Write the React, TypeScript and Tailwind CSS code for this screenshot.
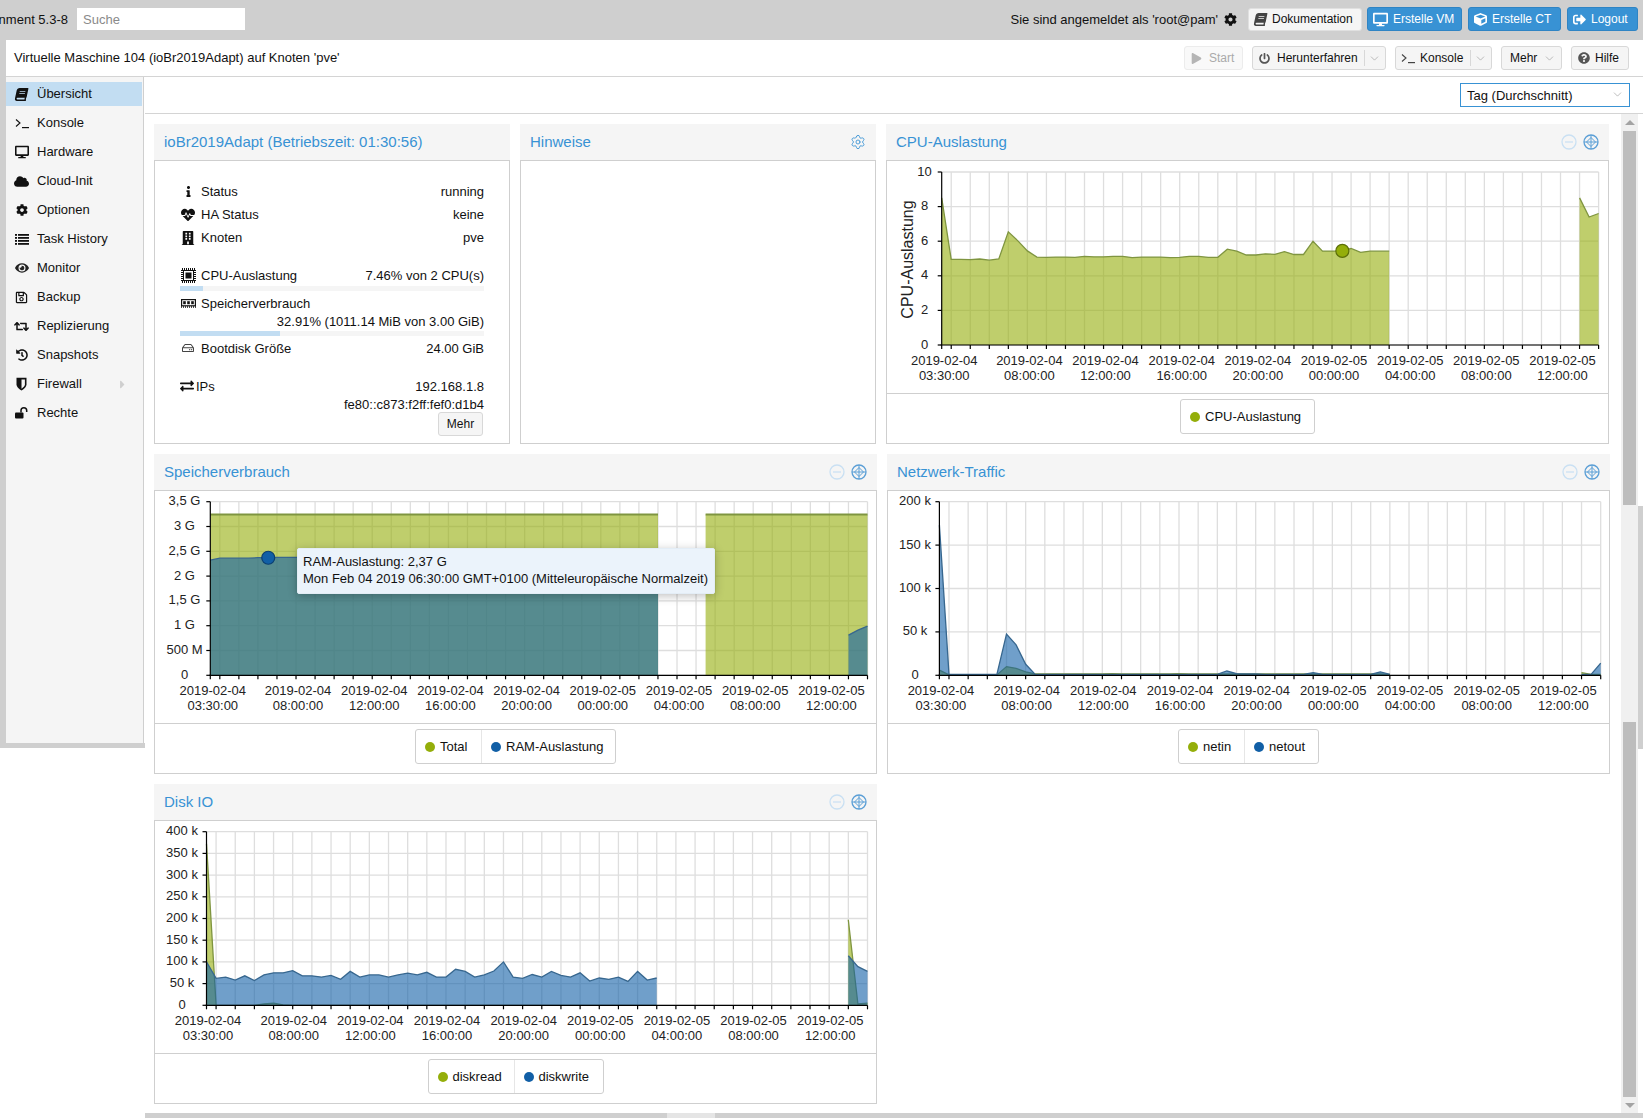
import { ChevronDown, Settings } from 'lucide-react';
import { ReactNode } from 'react';
import {
  FaBook, FaCloud, FaCog, FaCube, FaDesktop, FaExchangeAlt, FaEye, FaHeartbeat, FaHistory, FaInfo,
  FaBuilding, FaPlay, FaPowerOff, FaQuestionCircle, FaRegHdd, FaRegSave,
  FaRetweet, FaSignOutAlt, FaCaretRight,
} from 'react-icons/fa';

const GREEN = '#94ae0a';
const BLUE = '#115fa6';
const GREEN_LINE = '#7f9540';
const BLUE_LINE = '#37678f';

function TerminalIcon({ className }: { className?: string }) {
  return (
    <svg width="14" height="11" viewBox="0 0 14 11" className={className}>
      <path d="M1 1.5 5 5 1 8.5" fill="none" stroke="currentColor" strokeWidth="1.1" />
      <rect x="7" y="9" width="7" height="1.2" fill="currentColor" />
    </svg>
  );
}

function ListIcon() {
  return (
    <svg width="14" height="11" viewBox="0 0 14 11" fill="currentColor">
      {[0, 3, 6, 9].map((y) => (
        <g key={y}>
          <rect x="0" y={y} width="2" height="1.8" />
          <rect x="3" y={y} width="11" height="1.8" />
        </g>
      ))}
    </svg>
  );
}

function ShieldIcon() {
  return (
    <svg width="11" height="14" viewBox="0 0 11 14">
      <path d="M.5.8h10v6.4c0 3-3 5-5 6.3-2-1.3-5-3.300-5-6.300Z" fill="currentColor" />
      <path d="M5.500 2.500h3.400v4.700c0 2-1.800 3.400-3.400 4.500Z" fill="#f5f5f5" />
    </svg>
  );
}

function UnlockIcon() {
  return (
    <svg width="13" height="12" viewBox="0 0 13 12">
      <rect x="0" y="5.500" width="8.500" height="6" rx="1" fill="currentColor" />
      <path d="M6 5.500V3.600a2.800 2.800 0 0 1 5.700 0V5" fill="none" stroke="currentColor" strokeWidth="1.500" />
    </svg>
  );
}

function ChipIcon() {
  return (
    <svg width="15" height="15" viewBox="0 0 15 15">
      <rect x="1" y="1" width="13" height="13" fill="none" stroke="currentColor" strokeWidth="2" strokeDasharray="1 1" />
      <rect x="2.500" y="2.500" width="10" height="10" fill="#fff" stroke="currentColor" strokeWidth="1" />
      <rect x="4.500" y="4.500" width="6" height="6" fill="currentColor" />
    </svg>
  );
}

function MemIcon() {
  return (
    <svg width="15" height="9" viewBox="0 0 15 9">
      <rect x=".6" y=".6" width="13.800" height="6.200" fill="none" stroke="currentColor" strokeWidth="1.200" />
      <rect x="2.200" y="2.200" width="2.600" height="3" fill="currentColor" />
      <rect x="6.200" y="2.200" width="2.600" height="3" fill="currentColor" />
      <rect x="10.200" y="2.200" width="2.600" height="3" fill="currentColor" />
      <line x1="0" x2="15" y1="8" y2="8" stroke="currentColor" strokeWidth="1.400" strokeDasharray="1 1" />
    </svg>
  );
}

const NAV = [
  { label: 'Übersicht', icon: <FaBook size={13} className="-skew-x-12" />, active: true },
  { label: 'Konsole', icon: <TerminalIcon /> },
  { label: 'Hardware', icon: <FaDesktop size={14} /> },
  { label: 'Cloud-Init', icon: <FaCloud size={15} /> },
  { label: 'Optionen', icon: <FaCog size={12} /> },
  { label: 'Task History', icon: <ListIcon /> },
  { label: 'Monitor', icon: <FaEye size={14} className="text-[#222]" /> },
  { label: 'Backup', icon: <FaRegSave size={13} /> },
  { label: 'Replizierung', icon: <FaRetweet size={15} /> },
  { label: 'Snapshots', icon: <FaHistory size={12} /> },
  { label: 'Firewall', icon: <ShieldIcon />, arrow: true },
  { label: 'Rechte', icon: <UnlockIcon /> },
];

const X_LABELS = [
  ['2019-02-04', '03:30:00'],
  ['2019-02-04', '08:00:00'],
  ['2019-02-04', '12:00:00'],
  ['2019-02-04', '16:00:00'],
  ['2019-02-04', '20:00:00'],
  ['2019-02-05', '00:00:00'],
  ['2019-02-05', '04:00:00'],
  ['2019-02-05', '08:00:00'],
  ['2019-02-05', '12:00:00'],
];

type Segment = { start: number; values: number[] };
type Series = { fill: string; line: string; width?: number; segments: Segment[] };

interface ChartProps {
  view: [number, number, number, number];
  left: number;
  right: number;
  top: number;
  bottom: number;
  max: number;
  ticks: { value: number; label: string }[];
  labelX: number;
  labelShift?: number;
  series: Series[];
  marker?: { i: number; value: number; fill: string; stroke: string };
  yTitle?: string;
}

function Chart({ view, left, right, top, bottom, max, ticks, labelX, labelShift = 0, series, marker, yTitle }: ChartProps) {
  const xAt = (i: number) => left + ((right - left) * i) / 69;
  const yAt = (v: number) => bottom - ((bottom - top) * v) / max;
  const hours: number[] = [];
  for (let i = 1; i <= 69; i += 2) hours.push(i);

  return (
    <svg viewBox={view.join(' ')} width={view[2]} height={view[3]} className="block">
      {ticks.map((t) => (
        <line key={t.label} x1={left} x2={right} y1={yAt(t.value)} y2={yAt(t.value)} stroke="#dedede" strokeWidth="1.3" />
      ))}
      {hours.map((i) => (
        <line key={i} x1={xAt(i)} x2={xAt(i)} y1={top} y2={bottom} stroke="#dedede" strokeWidth="1.3" />
      ))}
      {series.map((s, n) =>
        s.segments.map((seg, k) => {
          const pts = seg.values.map((v, j) => `${xAt(seg.start + j).toFixed(1)},${yAt(v).toFixed(1)}`);
          const x1 = xAt(seg.start).toFixed(1);
          const x2 = xAt(seg.start + seg.values.length - 1).toFixed(1);
          return (
            <g key={`${n}-${k}`}>
              <polygon points={`${x1},${bottom} ${pts.join(' ')} ${x2},${bottom}`} fill={s.fill} fillOpacity="0.6" />
              <polyline points={pts.join(' ')} fill="none" stroke={s.line} strokeWidth={s.width ?? 1.3} />
            </g>
          );
        }),
      )}
      <line x1={left} x2={left} y1={top} y2={bottom} stroke="#000" strokeWidth="1.2" />
      <line x1={left - 1} x2={right} y1={bottom} y2={bottom} stroke="#000" strokeWidth="1.2" />
      <line x1={left} x2={left} y1={bottom} y2={bottom + 4} stroke="#000" strokeWidth="1.2" />
      {hours.map((i) => (
        <line key={i} x1={xAt(i)} x2={xAt(i)} y1={bottom} y2={bottom + 4} stroke="#000" strokeWidth="1.2" />
      ))}
      {ticks.map((t) => (
        <line key={t.label} x1={left - 4} x2={left} y1={yAt(t.value)} y2={yAt(t.value)} stroke="#000" strokeWidth="1.2" />
      ))}
      <g fontSize="13" fill="#222" fontFamily="'Liberation Sans', sans-serif">
        {ticks.map((t) => (
          <text key={t.label} x={labelX} y={yAt(t.value) + 3.5} textAnchor="middle">
            {t.label}
          </text>
        ))}
        {X_LABELS.map((l, n) => {
          const cx = (n === 0 ? left + 1.5 : xAt(1 + n * 8) + 1) + labelShift;
          return (
            <text key={n} textAnchor="middle">
              <tspan x={cx} y={bottom + 20}>{l[0]}</tspan>
              <tspan x={cx} y={bottom + 35}>{l[1]}</tspan>
            </text>
          );
        })}
        {yTitle && (
          <text x={0} y={0} fontSize="16" textAnchor="middle" transform={`translate(914 ${(top + bottom) / 2 + 1}) rotate(-90)`}>
            {yTitle}
          </text>
        )}
      </g>
      {marker && (
        <circle cx={xAt(marker.i) + 0.8} cy={yAt(marker.value)} r="6.5" fill={marker.fill} stroke={marker.stroke} strokeWidth="1.2" />
      )}
    </svg>
  );
}

function ToolIcons() {
  return (
    <div className="flex items-center gap-[6px]">
      <svg width="16" height="16" viewBox="0 0 16 16">
        <circle cx="8" cy="8" r="7" fill="none" stroke="#c9e0f3" strokeWidth="1.3" />
        <line x1="4" x2="12" y1="8" y2="8" stroke="#c9e0f3" strokeWidth="1.2" />
      </svg>
      <svg width="16" height="16" viewBox="0 0 16 16">
        <circle cx="8" cy="8" r="7" fill="none" stroke="#5b9fd6" strokeWidth="1.3" />
        <path d="M8 1v14M1 8h14M8 3.500 12.500 8 8 12.500 3.500 8Z" fill="none" stroke="#5b9fd6" strokeWidth="1" />
      </svg>
    </div>
  );
}

function Panel({ title, tools, className, children }: { title: string; tools?: ReactNode; className: string; children: ReactNode }) {
  return (
    <div className={`flex flex-col h-full ${className}`}>
      <div className="h-[36px] shrink-0 bg-[#f5f5f5] flex items-center justify-between pl-[10px] pr-[10px] text-[15px] text-[#3892d4]">
        <span className="pb-[2px]">{title}</span>
        {tools}
      </div>
      <div className="relative flex-1 min-h-0 flex flex-col border border-[#cfcfcf]">{children}</div>
    </div>
  );
}

function Legend({ items }: { items: { label: string; color: string; w: number }[] }) {
  return (
    <div className="h-[50px] shrink-0 border-t border-[#cfcfcf] flex items-start justify-center pt-[5px]">
      <div className="h-[35px] flex border border-[#cfcfcf] rounded-[3px]">
        {items.map((it, n) => (
          <div key={it.label} className={`flex items-center gap-[5px] pl-[9px] ${n > 0 ? 'border-l border-[#e6e6e6]' : ''}`} style={{ width: it.w }}>
            <span className="w-[10px] h-[10px] rounded-full shrink-0" style={{ background: it.color }} />
            <span>{it.label}</span>
          </div>
        ))}
      </div>
    </div>
  );
}

function Btn({ w, children, dim }: { w: number; children: ReactNode; dim?: boolean }) {
  return (
    <div
      className={`h-[24px] flex items-center rounded-[3px] border bg-[#f5f5f5] ${dim ? 'border-[#ececec] text-[#aaa] bg-[#f9f9f9]' : 'border-[#d8d8d8] text-[#111]'}`}
      style={{ width: w }}
    >
      {children}
    </div>
  );
}

function Caret({ divider }: { divider?: boolean }) {
  return (
    <span className={`ml-auto flex items-center ${divider ? 'border-l border-[#d8d8d8] h-[16px] pl-[3px] pr-[4px]' : 'pr-[5px]'}`}>
      <ChevronDown size={13} strokeWidth={1} className="text-[#888]" />
    </span>
  );
}

function BlueBtn({ w, icon, label }: { w: number; icon: ReactNode; label: string }) {
  return (
    <div className="h-[24px] flex items-center gap-[5px] pl-[5px] rounded-[3px] bg-[#3892d4] border border-[#2f84c4] text-white text-[12px]" style={{ width: w }}>
      {icon}
      <span>{label}</span>
    </div>
  );
}

function InfoRow({ icon, label, value, h = 23 }: { icon: ReactNode; label: string; value?: string; h?: number }) {
  return (
    <div className="flex items-center justify-between" style={{ height: h }}>
      <div className="flex items-center">
        <span className="w-[16px] flex justify-center">{icon}</span>
        <span className="ml-[5px]">{label}</span>
      </div>
      {value && <span>{value}</span>}
    </div>
  );
}

function Bar({ pct }: { pct: number }) {
  return (
    <div className="h-[5px] bg-[#f5f5f5]">
      <div className="h-full bg-[#c2ddf2]" style={{ width: `${pct}%` }} />
    </div>
  );
}

const cpuValues = [
  8.5, 4.95, 4.95, 4.93, 4.97, 4.9, 4.97, 6.54, 6.02, 5.44, 5.08, 5.07, 5.08, 5.08, 5.07, 5.12, 5.1, 5.1, 5.13, 5.13, 5.05,
  5.08, 5.08, 5.08, 5.05, 5.07, 5.13, 5.12, 5.07, 5.07, 5.54, 5.42, 5.2, 5.2, 5.27, 5.24, 5.4, 5.23, 5.23, 6.0, 5.43, 5.43,
  5.44, 5.58, 5.36, 5.42, 5.42, 5.42,
];
const totalA = Array.from({ length: 48 }, () => 3.24);
const totalB = Array.from({ length: 18 }, () => 3.24);
const ramValues = [2.32, 2.36, 2.36, 2.36, 2.36, 2.37, 2.37, 2.38, ...Array.from({ length: 40 }, () => 2.38)];
const netOut = [
  173, 1, 1, 1, 1, 1, 1, 47.6, 35, 12.7, 1, 1, 1, 1, 1, 1, 1, 1, 1, 1, 1, 1, 1, 1, 1, 1, 1, 1, 1, 1, 5, 2, 1.5, 1.5, 1, 1, 1, 1,
  1, 3, 1, 1, 1, 1, 1, 1, 4, 1,
];
const netIn = [
  6, 0.5, 0.5, 0.5, 0.5, 0.5, 0.5, 10, 8, 4, 1.5, 1.5, 1.5, 1.5, 1.5, 1.5, 1.5, 1.5, 2, 1.5, 1.5, 1.5, 1.5, 1.5, 1.5, 2, 1.5, 1.5,
  1.5, 1.5, 1.5, 1.5, 1.5, 1.5, 1.5, 1.5, 1.5, 1.5, 1.5, 1.5, 1.5, 1.5, 1.5, 1.5, 1.5, 1.5, 1.5, 1,
];
const diskWrite = [
  100, 62, 65, 58, 68, 57, 70, 75, 75, 80, 68, 68, 65, 69, 60, 78, 65, 70, 70, 65, 70, 74, 70, 76, 65, 65, 83, 78, 65, 70, 79, 100,
  65, 62, 71, 65, 78, 69, 65, 75, 56, 63, 60, 65, 55, 78, 58, 63,
];
const diskRead = [372, 0, 0, 0, 0, 0, 3, 5, 1, 0, ...Array.from({ length: 38 }, () => 0)];

export default function App() {
  return (
    <div className="w-[1643px] h-[1118px] overflow-hidden bg-white flex flex-col text-[13px] leading-none text-[#111] font-['Liberation_Sans',sans-serif]">
      {/* top bar */}
      <div className="h-[40px] shrink-0 bg-[#cfcfcf] flex items-center pr-[5px] pb-[2px]">
        <div className="w-[68px] flex justify-end overflow-hidden whitespace-nowrap">
          <span className="shrink-0">Virtual Environment 5.3-8</span>
        </div>
        <div className="ml-[9px] w-[168px] h-[22px] bg-white flex items-center pl-[6px] text-[#8a8a8a]">Suche</div>
        <div className="ml-auto flex items-center whitespace-nowrap">
          <span>Sie sind angemeldet als 'root@pam'</span>
          <FaCog size={13} className="ml-[6px] mr-[11px]" />
          <div className="w-[114px] h-[23px] flex items-center gap-[5px] pl-[5px] rounded-[3px] bg-[#f5f5f5] border border-[#e0e0e0] text-[12px]">
            <FaBook size={13} className="text-[#444] -skew-x-12" />
            <span>Dokumentation</span>
          </div>
          <div className="ml-[5px] flex gap-[6px]">
            <BlueBtn w={95} icon={<FaDesktop size={15} />} label="Erstelle VM" />
            <BlueBtn w={93} icon={<FaCube size={13} />} label="Erstelle CT" />
            <BlueBtn w={71} icon={<FaSignOutAlt size={13} />} label="Logout" />
          </div>
        </div>
      </div>

      {/* header */}
      <div className="h-[37px] shrink-0 flex">
        <div className="w-[6px] bg-[#cfcfcf]" />
        <div className="flex-1 border-b border-[#d4d4d4] flex items-center pl-[8px] pr-[14px]">
          <span className="pb-[1px]">Virtuelle Maschine 104 (ioBr2019Adapt) auf Knoten 'pve'</span>
          <div className="ml-auto flex items-center gap-[9px] text-[12px]">
            <Btn w={59} dim>
              <FaPlay size={11} className="ml-[6px] text-[#b5b5b5]" />
              <span className="ml-[7px]">Start</span>
            </Btn>
            <Btn w={134}>
              <FaPowerOff size={11} className="ml-[6px] text-[#555]" />
              <span className="ml-[7px]">Herunterfahren</span>
              <Caret divider />
            </Btn>
            <Btn w={97}>
              <TerminalIcon className="ml-[5px] text-[#444]" />
              <span className="ml-[5px]">Konsole</span>
              <Caret divider />
            </Btn>
            <Btn w={61}>
              <span className="ml-[8px]">Mehr</span>
              <Caret />
            </Btn>
            <Btn w={58}>
              <FaQuestionCircle size={12} className="ml-[6px] text-[#555]" />
              <span className="ml-[5px]">Hilfe</span>
            </Btn>
          </div>
        </div>
      </div>

      <div className="relative flex-1 min-h-0 flex items-start">
        {/* sidebar */}
        <div className="w-[145px] h-[671px] shrink-0 border-l-[6px] border-b-[5px] border-[#cfcfcf]">
          <div className="w-[138px] h-full bg-[#f5f5f5] border-r border-[#cfcfcf] pt-[5px] flex flex-col gap-[5px]">
            {NAV.map((n) => (
              <div key={n.label} className={`h-[24px] w-[136px] shrink-0 flex items-center ${n.active ? 'bg-[#c2ddf2]' : ''}`}>
                <span className="w-[31px] flex justify-center text-[#111]">{n.icon}</span>
                <span className="pb-[2px]">{n.label}</span>
                {n.arrow && <FaCaretRight size={13} className="ml-auto mr-[13px] text-[#cfcfcf]" />}
              </div>
            ))}
          </div>
        </div>

        <div className="flex-1 h-full flex flex-col">
          {/* range selector */}
          <div className="h-[37px] shrink-0 border-b border-[#d4d4d4] flex items-center justify-end pr-[13px]">
            <div className="w-[170px] h-[24px] border border-[#3892d4] flex items-center pl-[6px] pr-[5px] mt-[-1px]">
              <span className="pt-[2px]">Tag (Durchschnitt)</span>
              <ChevronDown size={13} strokeWidth={1} className="ml-auto text-[#888]" />
            </div>
          </div>

          <div className="flex-1 min-h-0 flex">
            {/* panels */}
            <div className="w-[1476px] shrink-0 pl-[9px] pt-[10px] flex flex-col gap-[10px]">
              <div className="h-[320px] flex">
                <Panel title="ioBr2019Adapt (Betriebszeit: 01:30:56)" className="w-[356px]">
                  <div className="px-[25px] pt-[19px]">
                    <InfoRow icon={<FaInfo size={11} />} label="Status" value="running" />
                    <InfoRow icon={<FaHeartbeat size={14} />} label="HA Status" value="keine" />
                    <InfoRow icon={<FaBuilding size={14} />} label="Knoten" value="pve" />
                    <div className="mt-[15px]">
                      <InfoRow icon={<ChipIcon />} label="CPU-Auslastung" value="7.46% von 2 CPU(s)" h={22} />
                    </div>
                    <Bar pct={7.46} />
                    <div className="mt-[1px]">
                      <InfoRow icon={<MemIcon />} label="Speicherverbrauch" h={22} />
                    </div>
                    <div className="text-right mt-[-2px] h-[19px] flex items-center justify-end">32.91% (1011.14 MiB von 3.00 GiB)</div>
                    <Bar pct={32.91} />
                    <div className="mt-[1px]">
                      <InfoRow icon={<FaRegHdd size={12} className="text-[#444]" />} label="Bootdisk Größe" value="24.00 GiB" h={22} />
                    </div>
                    <div className="mt-[16px] flex items-start justify-between">
                      <div className="flex items-center h-[22px]">
                        <FaExchangeAlt size={14} />
                        <span className="ml-[2px]">IPs</span>
                      </div>
                      <div className="text-right">
                        <div className="h-[22px] flex items-center justify-end">192.168.1.8</div>
                        <div className="h-[15px] flex items-center justify-end">fe80::c873:f2ff:fef0:d1b4</div>
                      </div>
                    </div>
                    <div className="flex justify-end pr-[1px]">
                      <div className="w-[45px] h-[24px] flex items-center justify-center rounded-[3px] border border-[#d8d8d8] bg-[#f5f5f5] text-[12px]">Mehr</div>
                    </div>
                  </div>
                </Panel>
                <Panel title="Hinweise" tools={<Settings size={16} strokeWidth={1.3} className="text-[#3892d4]" />} className="w-[356px] ml-[10px]">
                  <div />
                </Panel>
                <Panel title="CPU-Auslastung" tools={<ToolIcons />} className="w-[723px] ml-[10px]">
                  <div className="flex-1 min-h-0">
                    <Chart
                      view={[888, 161, 720, 232]}
                      left={942.7}
                      right={1599.6}
                      top={172}
                      bottom={345}
                      max={10}
                      labelX={925.5}
                      labelShift={1}
                      yTitle="CPU-Auslastung"
                      ticks={[10, 8, 6, 4, 2, 0].map((v) => ({ value: v, label: String(v) }))}
                      series={[{ fill: GREEN, line: GREEN_LINE, segments: [{ start: 0, values: cpuValues }, { start: 67, values: [8.5, 7.4, 7.6] }] }]}
                      marker={{ i: 42, value: 5.44, fill: GREEN, stroke: '#5c6f08' }}
                    />
                  </div>
                  <Legend items={[{ label: 'CPU-Auslastung', color: GREEN, w: 133 }]} />
                </Panel>
              </div>

              <div className="h-[320px] flex">
                <Panel title="Speicherverbrauch" tools={<ToolIcons />} className="w-[723px]">
                  <div className="flex-1 min-h-0">
                    <Chart
                      view={[155, 491, 721, 232]}
                      left={210.3}
                      right={867.5}
                      top={501.7}
                      bottom={675.3}
                      max={3.5}
                      labelX={184.5}
                      labelShift={1}
                      ticks={[
                        { value: 3.5, label: '3,5 G' },
                        { value: 3, label: '3 G' },
                        { value: 2.5, label: '2,5 G' },
                        { value: 2, label: '2 G' },
                        { value: 1.5, label: '1,5 G' },
                        { value: 1, label: '1 G' },
                        { value: 0.5, label: '500 M' },
                        { value: 0, label: '0' },
                      ]}
                      series={[
                        { fill: GREEN, line: GREEN_LINE, width: 2, segments: [{ start: 0, values: totalA }, { start: 52, values: totalB }] },
                        { fill: BLUE, line: BLUE_LINE, segments: [{ start: 0, values: ramValues }, { start: 67, values: [0.81, 0.91, 0.99] }] },
                      ]}
                      marker={{ i: 6, value: 2.37, fill: BLUE, stroke: '#0b3f70' }}
                    />
                  </div>
                  <Legend
                    items={[
                      { label: 'Total', color: GREEN, w: 65 },
                      { label: 'RAM-Auslastung', color: BLUE, w: 134 },
                    ]}
                  />
                  {/* tooltip over the chart */}
                  <div className="absolute left-[142px] top-[57px] w-[418px] h-[46px] rounded-[2px] bg-[#ebf3fb] border border-[#e3edf6] shadow-[0_2px_10px_rgba(0,0,0,0.25)] pl-[5px] pb-[2px] flex flex-col justify-center gap-[3px] whitespace-nowrap leading-[14px]">
                    <span>RAM-Auslastung: 2,37 G</span>
                    <span>Mon Feb 04 2019 06:30:00 GMT+0100 (Mitteleuropäische Normalzeit)</span>
                  </div>
                </Panel>
                <Panel title="Netzwerk-Traffic" tools={<ToolIcons />} className="w-[723px] ml-[10px]">
                  <div className="flex-1 min-h-0">
                    <Chart
                      view={[888, 491, 721, 232]}
                      left={939.4}
                      right={1600.7}
                      top={501.7}
                      bottom={675.3}
                      max={200}
                      labelX={915}
                      ticks={[200, 150, 100, 50, 0].map((v) => ({ value: v, label: v ? `${v} k` : '0' }))}
                      series={[
                        { fill: GREEN, line: GREEN_LINE, segments: [{ start: 0, values: netIn }, { start: 67, values: [3, 1, 1] }] },
                        { fill: BLUE, line: BLUE_LINE, segments: [{ start: 0, values: netOut }, { start: 67, values: [1, 1, 14] }] },
                      ]}
                    />
                  </div>
                  <Legend
                    items={[
                      { label: 'netin', color: GREEN, w: 65 },
                      { label: 'netout', color: BLUE, w: 74 },
                    ]}
                  />
                </Panel>
              </div>

              <div className="h-[320px] flex">
                <Panel title="Disk IO" tools={<ToolIcons />} className="w-[723px]">
                  <div className="flex-1 min-h-0">
                    <Chart
                      view={[155, 821, 721, 232]}
                      left={206.5}
                      right={867.5}
                      top={831.7}
                      bottom={1005.3}
                      max={400}
                      labelX={182}
                      ticks={[400, 350, 300, 250, 200, 150, 100, 50, 0].map((v) => ({ value: v, label: v ? `${v} k` : '0' }))}
                      series={[
                        { fill: GREEN, line: GREEN_LINE, segments: [{ start: 0, values: diskRead }, { start: 67, values: [197, 3, 5] }] },
                        { fill: BLUE, line: BLUE_LINE, segments: [{ start: 0, values: diskWrite }, { start: 67, values: [114, 89, 78] }] },
                      ]}
                    />
                  </div>
                  <Legend
                    items={[
                      { label: 'diskread', color: GREEN, w: 85 },
                      { label: 'diskwrite', color: BLUE, w: 89 },
                    ]}
                  />
                </Panel>
              </div>
            </div>

            {/* scrollbar */}
            <div className="w-[17px] h-[999px] shrink-0 bg-[#f0f0f0] flex flex-col items-center">
              <span className="mt-[6px] w-0 h-0 border-x-[5px] border-x-transparent border-b-[5px] border-b-[#a3a3a3]" />
              <div className="mt-[6px] w-[13px] h-[374px] bg-[#bdbdbd]" />
              <div className="mt-[217px] w-[13px] h-[375px] bg-[#bdbdbd]" />
              <span className="mt-[6px] w-0 h-0 border-x-[5px] border-x-transparent border-t-[5px] border-t-[#a3a3a3]" />
            </div>
            <div className="w-[5px] shrink-0">
              <div className="mt-[392px] h-[243px] bg-[#cfcfcf]" />
            </div>
          </div>
        </div>

        {/* bottom splitter */}
        <div className="absolute left-[145px] right-0 bottom-0 h-[5px] bg-[#cfcfcf] flex justify-center">
          <div className="ml-[-406px] w-[48px] h-full bg-[#e5e5e5]" />
        </div>
      </div>
    </div>
  );
}
